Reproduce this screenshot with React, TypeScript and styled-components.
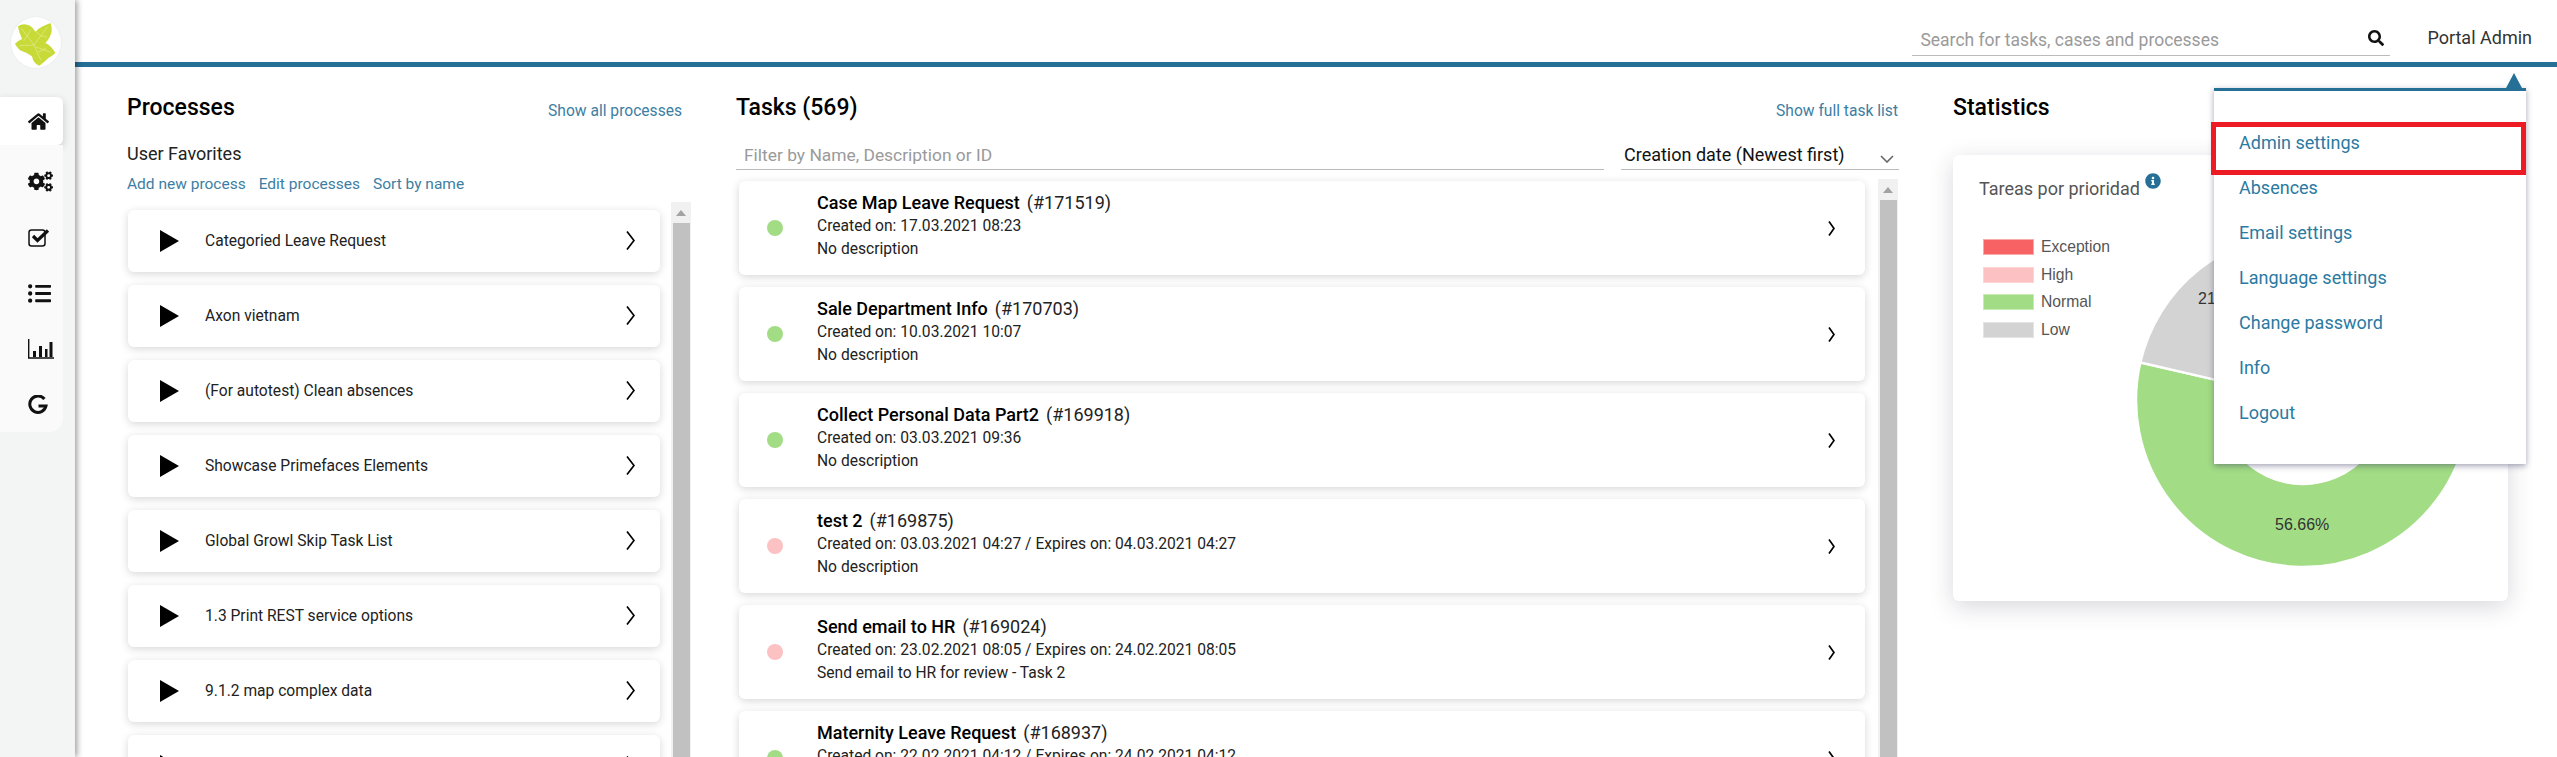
import styled, { createGlobalStyle } from "styled-components";
import {
  FaCogs,
  FaHome,
  FaInfoCircle,
  FaListUl,
  FaSearch,
} from "react-icons/fa";

const GlobalStyle = createGlobalStyle`
  html, body {
    margin: 0;
    height: 757px;
    overflow: hidden;
    background: #fff;
    font-family: Roboto, "Noto Sans", sans-serif;
    color: #111;
  }
  * {
    box-sizing: border-box;
  }
`;

// the last row is cut by the window, only its icons show
const processes = [
  "Categoried Leave Request",
  "Axon vietnam",
  "(For autotest) Clean absences",
  "Showcase Primefaces Elements",
  "Global Growl Skip Task List",
  "1.3 Print REST service options",
  "9.1.2 map complex data",
  "",
];

type Task = {
  name: string;
  id: number;
  dates: string;
  description: string;
  priority: "normal" | "high";
};

const tasks: Task[] = [
  { name: "Case Map Leave Request", id: 171519, dates: "Created on: 17.03.2021 08:23", description: "No description", priority: "normal" },
  { name: "Sale Department Info", id: 170703, dates: "Created on: 10.03.2021 10:07", description: "No description", priority: "normal" },
  { name: "Collect Personal Data Part2", id: 169918, dates: "Created on: 03.03.2021 09:36", description: "No description", priority: "normal" },
  { name: "test 2", id: 169875, dates: "Created on: 03.03.2021 04:27 / Expires on: 04.03.2021 04:27", description: "No description", priority: "high" },
  { name: "Send email to HR", id: 169024, dates: "Created on: 23.02.2021 08:05 / Expires on: 24.02.2021 08:05", description: "Send email to HR for review - Task 2", priority: "high" },
  { name: "Maternity Leave Request", id: 168937, dates: "Created on: 22.02.2021 04:12 / Expires on: 24.02.2021 04:12", description: "", priority: "normal" },
];

const legend = [
  { label: "Exception", fill: "#f76365", edge: "#fbaaaa" },
  { label: "High", fill: "#fcc1c2", edge: "#fdd5d5" },
  { label: "Normal", fill: "#a2dc85", edge: "#c6ecb4" },
  { label: "Low", fill: "#d3d3d3", edge: "#e4e4e4" },
];

const menuItems = [
  "Admin settings",
  "Absences",
  "Email settings",
  "Language settings",
  "Change password",
  "Info",
  "Logout",
];

// donut segment, angles in degrees clockwise from the +x axis
function segment(start: number, end: number) {
  const c = 170;
  const outer = 167;
  const inner = 84;
  const pt = (r: number, a: number) => {
    const rad = (a * Math.PI) / 180;
    return `${c + r * Math.cos(rad)} ${c + r * Math.sin(rad)}`;
  };
  const large = end - start > 180 ? 1 : 0;
  return `M${pt(outer, start)} A${outer} ${outer} 0 ${large} 1 ${pt(outer, end)} L${pt(inner, end)} A${inner} ${inner} 0 ${large} 0 ${pt(inner, start)} Z`;
}

function Donut() {
  return (
    <DonutSvg viewBox="0 0 340 340" aria-hidden="true">
      <path d={segment(-11, 193)} fill="#a2dc85" stroke="#fff" strokeWidth="2.5" />
      <path d={segment(193, 270)} fill="#d3d3d3" stroke="#fff" strokeWidth="2.5" />
      <path d={segment(270, 325)} fill="#fcc1c2" stroke="#fff" strokeWidth="2.5" />
      <path d={segment(325, 349)} fill="#f76365" stroke="#fff" strokeWidth="2.5" />
      <ChartLabel x="65" y="74">21.34%</ChartLabel>
      <ChartLabel x="142" y="300">56.66%</ChartLabel>
    </DonutSvg>
  );
}

function Logo() {
  return (
    <LogoCircle>
      <svg width="50" height="50" viewBox="3 6 150 150" aria-hidden="true">
        <path
          d="M24 34 Q40 22 60 32 Q70 38 76 50 Q88 36 122 24 Q130 50 118 68 Q112 78 106 84 Q124 92 136 114 Q126 124 116 128 Q102 142 88 152 Q70 146 66 124 Q48 112 30 106 Q20 96 15 86 Q26 76 36 72 Q26 52 24 34 Z"
          fill="#c8da38"
        />
        <path
          d="M34 40 L72 90 L92 135 M72 90 L112 36 M72 90 L28 92 M78 96 L122 112 M52 62 L40 78 M52 62 L62 44 M92 62 L78 50 M92 62 L110 66 M84 112 L108 100"
          fill="none"
          stroke="#e3ec93"
          strokeWidth="2"
        />
      </svg>
    </LogoCircle>
  );
}

function CheckIcon() {
  return (
    <svg width="25" height="19" viewBox="0 0 25 19" aria-hidden="true">
      <rect x="1" y="2" width="16" height="16" rx="2.5" fill="none" stroke="#111" strokeWidth="1.5" />
      <path d="M5 8 L9.5 12.5 L20 2.5" fill="none" stroke="#111" strokeWidth="3.2" />
    </svg>
  );
}

function BarsIcon() {
  return (
    <svg width="26" height="20" viewBox="0 0 26 20" aria-hidden="true">
      <path d="M0.7 0 V19 H26" fill="none" stroke="#111" strokeWidth="1.4" />
      <path d="M5 12h3v6H5z M11 7h3v11h-3z M17 10h2.5v8H17z M21.5 3h3v15h-3z" fill="#111" />
    </svg>
  );
}

function GIcon() {
  return (
    <svg width="20" height="20" viewBox="0 0 20 20" aria-hidden="true">
      <path d="M16.4 4 A8.2 8.2 0 1 0 18 11 H10.5" fill="none" stroke="#111" strokeWidth="3" />
    </svg>
  );
}

function Play() {
  return (
    <svg width="19" height="22" viewBox="0 0 19 22" aria-hidden="true">
      <polygon points="0,0 19,11 0,22" fill="#000" />
    </svg>
  );
}

function Chevron({ size }: { size: "large" | "small" }) {
  const h = size === "large" ? 19 : 15;
  const w = size === "large" ? 9 : 7;
  return (
    <ChevronSvg width={w} height={h} viewBox={`0 0 ${w} ${h}`} aria-hidden="true">
      <polyline points={`1,0.5 ${w - 1},${h / 2} 1,${h - 0.5}`} fill="none" stroke="#000" strokeWidth="1.7" />
    </ChevronSvg>
  );
}

function Scrollbar() {
  return (
    <Track>
      <ArrowBox>
        <TrackArrow />
      </ArrowBox>
      <Thumb />
    </Track>
  );
}

export default function App() {
  return (
    <Page>
      <GlobalStyle />
      <Sidebar>
        <Logo />
        <HomeTab>
          <FaHome size={21} />
        </HomeTab>
        <NavGroup>
          <NavItem>
            <FaCogs size={25} />
          </NavItem>
          <NavItem>
            <CheckIcon />
          </NavItem>
          <NavItem>
            <FaListUl size={23} />
          </NavItem>
          <NavItem>
            <BarsIcon />
          </NavItem>
          <NavItem>
            <GIcon />
          </NavItem>
        </NavGroup>
      </Sidebar>

      <Main>
        <Header>
          <SearchBox>
            <SearchInput placeholder="Search for tasks, cases and processes" readOnly />
            <FaSearch size={16} />
          </SearchBox>
          <UserName>Portal Admin</UserName>
        </Header>

        <Content>
          <Column>
            <SectionHead>
              <SectionTitle>Processes</SectionTitle>
              <HeadLink $inset={9}>Show all processes</HeadLink>
            </SectionHead>
            <Subtitle>User Favorites</Subtitle>
            <LinkRow>
              <RowLink>Add new process</RowLink>
              <RowLink>Edit processes</RowLink>
              <RowLink>Sort by name</RowLink>
            </LinkRow>
            <ProcessArea>
              <ProcessList>
                {processes.map((name) => (
                  <ProcessCard key={name}>
                    <Play />
                    <ProcessName>{name}</ProcessName>
                    <Chevron size="large" />
                  </ProcessCard>
                ))}
              </ProcessList>
              <Scrollbar />
            </ProcessArea>
          </Column>

          <Column>
            <SectionHead>
              <SectionTitle>Tasks (569)</SectionTitle>
              <HeadLink $inset={1}>Show full task list</HeadLink>
            </SectionHead>
            <FilterRow>
              <FilterInput placeholder="Filter by Name, Description or ID" readOnly />
              <SortSelect>
                Creation date (Newest first)
                <svg width="14" height="8" viewBox="0 0 14 8" aria-hidden="true">
                  <polyline points="1,1 7,7 13,1" fill="none" stroke="#666" strokeWidth="1.6" />
                </svg>
              </SortSelect>
            </FilterRow>
            <TaskArea>
              <TaskList>
                {tasks.map((t) => (
                  <TaskCard key={t.id}>
                    <PriorityDot $priority={t.priority} />
                    <TaskBody>
                      <TaskTitle>
                        <strong>{t.name}</strong>
                        <span>(#{t.id})</span>
                      </TaskTitle>
                      <TaskMeta>{t.dates}</TaskMeta>
                      <TaskMeta>{t.description}</TaskMeta>
                    </TaskBody>
                    <Chevron size="small" />
                  </TaskCard>
                ))}
              </TaskList>
              <Scrollbar />
            </TaskArea>
          </Column>

          <StatsColumn>
            <SectionHead>
              <SectionTitle>Statistics</SectionTitle>
            </SectionHead>
            <StatsCard>
              <StatsTitle>
                Tareas por prioridad
                <InfoMark>
                  <FaInfoCircle size={16} />
                </InfoMark>
              </StatsTitle>
              <ChartRow>
                <Legend>
                  {legend.map((l) => (
                    <LegendRow key={l.label}>
                      <Swatch $fill={l.fill} $edge={l.edge} />
                      {l.label}
                    </LegendRow>
                  ))}
                </Legend>
                <Donut />
              </ChartRow>
            </StatsCard>
          </StatsColumn>
        </Content>
      </Main>

      <UserMenu>
        {menuItems.map((item, i) => (
          <MenuItem key={item} $active={i === 0}>
            {item}
          </MenuItem>
        ))}
      </UserMenu>
    </Page>
  );
}

const Page = styled.div`
  position: relative;
  display: flex;
  width: 2557px;
  height: 757px;
  overflow: hidden;
`;

const Sidebar = styled.aside`
  position: relative;
  z-index: 2;
  flex: 0 0 75px;
  padding-top: 17px;
  background: #f3f5f5;
  box-shadow: 2px 0 6px rgba(0, 0, 0, 0.4);
`;

const LogoCircle = styled.div`
  width: 50px;
  height: 51px;
  margin-left: 11px;
  border-radius: 50%;
  background: #fff;
  box-shadow: 0 0 2px rgba(0, 0, 0, 0.08);
`;

const HomeTab = styled.div`
  display: flex;
  align-items: center;
  padding-left: 28px;
  width: 63px;
  height: 48px;
  margin-top: 29px;
  background: #fff;
  border-radius: 0 6px 6px 0;
  box-shadow: 0 3px 8px rgba(0, 0, 0, 0.18);
`;

const NavGroup = styled.nav`
  width: 63px;
  height: 287px;
  padding-top: 8px;
  background: #fafafa;
  border-radius: 0 0 14px 0;
`;

const NavItem = styled.div`
  display: flex;
  align-items: center;
  height: 56px;
  padding-left: 28px;
  color: #111;
`;

const Main = styled.div`
  flex: 1;
  min-width: 0;
  display: flex;
  flex-direction: column;
`;

const Header = styled.header`
  display: flex;
  justify-content: flex-end;
  align-items: flex-start;
  flex: 0 0 67px;
  padding: 24px 25px 0 0;
  border-bottom: 5px solid #266f96;
`;

const SearchBox = styled.div`
  display: flex;
  align-items: center;
  width: 478px;
  height: 32px;
  padding: 0 6px 0 8px;
  border-bottom: 1px solid #bbb;
  color: #111;

  svg {
    margin-top: -3px;
  }
`;

const SearchInput = styled.input`
  flex: 1;
  border: 0;
  padding: 0;
  outline: none;
  background: none;
  font: 400 17.5px/30px Roboto, sans-serif;

  &::placeholder {
    color: #9a9a9a;
    opacity: 1;
  }
`;

const UserName = styled.div`
  margin-left: 37px;
  font-size: 18px;
  line-height: 28px;
  color: #333;
`;

const Content = styled.main`
  flex: 1;
  min-height: 0;
  display: grid;
  grid-template-columns: 564px 1163px 564px;
  column-gap: 45px;
  padding: 28px 0 0 52px;
`;

const Column = styled.section`
  display: flex;
  flex-direction: column;
  min-width: 0;
  min-height: 0;
`;

const StatsColumn = styled(Column)`
  margin-left: 9px;
`;

const SectionHead = styled.div`
  display: flex;
  align-items: center;
  justify-content: space-between;
  height: 24px;
`;

const SectionTitle = styled.h2`
  margin: 1px 0 0;
  font-size: 23px;
  font-weight: 500;
  line-height: 24px;
  color: #000;
`;

const HeadLink = styled.a<{ $inset: number }>`
  margin: 8px ${({ $inset }) => $inset}px 0 0;
  font-size: 15.6px;
  color: #3d7ea3;
`;

const Subtitle = styled.div`
  margin-top: 23px;
  font-size: 18px;
  line-height: 24px;
  color: #222;
`;

const LinkRow = styled.div`
  display: flex;
  gap: 13px;
  margin-top: 8px;
  height: 20px;
  line-height: 20px;
`;

const RowLink = styled.a`
  font-size: 15.5px;
  color: #3d7ea3;
`;

const ProcessArea = styled.div`
  flex: 1;
  min-height: 0;
  display: flex;
  margin-top: 8px;
`;

const ProcessList = styled.div`
  width: 544px;
  display: flex;
  flex-direction: column;
  gap: 13px;
  padding: 8px 11px 0 1px;
`;

const ProcessCard = styled.div`
  flex: 0 0 62px;
  display: flex;
  align-items: center;
  padding: 0 25px 1px 32px;
  background: #fff;
  border-radius: 6px;
  box-shadow: 0 2px 9px rgba(0, 0, 0, 0.16);
`;

const ProcessName = styled.div`
  margin-left: 26px;
  font-size: 15.6px;
  color: #222;
`;

const ChevronSvg = styled.svg`
  margin-left: auto;
  flex: none;
`;

const Track = styled.div`
  flex: 0 0 20px;
  display: flex;
  flex-direction: column;
  align-items: center;
  background: #f1f1f1;
`;

const ArrowBox = styled.div`
  flex: 0 0 21px;
  display: flex;
  align-items: center;
  justify-content: center;
`;

const TrackArrow = styled.div`
  width: 0;
  height: 0;
  border-left: 5px solid transparent;
  border-right: 5px solid transparent;
  border-bottom: 6px solid #a3a3a3;
`;

const Thumb = styled.div`
  flex: 1;
  width: 17px;
  background: #c1c1c1;
`;

const FilterRow = styled.div`
  display: flex;
  gap: 17px;
  margin-top: 21px;
  height: 30px;
`;

const FilterInput = styled.input`
  flex: 0 0 868px;
  height: 30px;
  border: 0;
  border-bottom: 1px solid #bbb;
  padding: 0 8px;
  outline: none;
  background: none;
  font: 400 17.4px/28px Roboto, sans-serif;

  &::placeholder {
    color: #9a9a9a;
    opacity: 1;
  }
`;

const SortSelect = styled.div`
  flex: 1;
  display: flex;
  align-items: center;
  justify-content: space-between;
  padding: 0 5px 0 3px;
  border-bottom: 1px solid #bbb;
  font-size: 18px;
  line-height: 28px;
  color: #111;

  svg {
    margin-top: 8px;
  }
`;

const TaskArea = styled.div`
  flex: 1;
  min-height: 0;
  display: flex;
  margin-top: 9px;
`;

const TaskList = styled.div`
  width: 1142px;
  display: flex;
  flex-direction: column;
  gap: 12px;
  padding: 2px 13px 0 3px;
`;

const TaskCard = styled.article`
  flex: 0 0 94px;
  display: flex;
  align-items: center;
  padding: 0 30px 0 28px;
  background: #fff;
  border-radius: 6px;
  box-shadow: 0 2px 9px rgba(0, 0, 0, 0.16);
`;

const PriorityDot = styled.span<{ $priority: "normal" | "high" }>`
  flex: none;
  width: 16px;
  height: 16px;
  border-radius: 50%;
  background: ${({ $priority }) =>
    $priority === "high" ? "#fcc1c2" : "#a2dc85"};
`;

const TaskBody = styled.div`
  margin-left: 34px;
  padding-bottom: 5px;
`;

const TaskTitle = styled.div`
  display: flex;
  gap: 7px;
  font-size: 18px;
  line-height: 24px;
  color: #222;

  strong {
    font-weight: 500;
    color: #000;
  }
`;

const TaskMeta = styled.div`
  min-height: 23px;
  font-size: 15.6px;
  line-height: 23px;
  color: #222;
`;

const StatsCard = styled.div`
  height: 446px;
  margin-top: 36px;
  padding: 22px 26px 0;
  background: #fff;
  border-radius: 6px;
  box-shadow: 0 6px 24px rgba(40, 40, 70, 0.18);
`;

const StatsTitle = styled.div`
  display: flex;
  font-size: 18px;
  line-height: 24px;
  color: #555;
`;

const InfoMark = styled.span`
  margin: -6px 0 0 5px;
  color: #266f96;
`;

const ChartRow = styled.div`
  display: flex;
  margin-top: 29px;
`;

const Legend = styled.div`
  flex: 0 0 120px;
  display: flex;
  flex-direction: column;
  gap: 11.5px;
  padding: 9px 0 0 4px;
`;

const LegendRow = styled.div`
  display: flex;
  align-items: center;
  gap: 7px;
  height: 16px;
  font-family: "Liberation Sans", sans-serif;
  font-size: 15.7px;
  color: #555;
`;

const Swatch = styled.span<{ $fill: string; $edge: string }>`
  flex: 0 0 51px;
  height: 16px;
  background: ${({ $fill }) => $fill};
  border: 1px solid ${({ $edge }) => $edge};
`;

const DonutSvg = styled.svg`
  flex: 0 0 340px;
  height: 340px;
  margin-left: 23px;
`;

const ChartLabel = styled.text`
  font-family: "Liberation Sans", sans-serif;
  font-size: 16px;
  fill: #333;
`;

const UserMenu = styled.div`
  position: absolute;
  z-index: 3;
  top: 88px;
  right: 31px;
  width: 312px;
  height: 376px;
  padding-top: 30px;
  background: #fff;
  border-top: 3px solid #266f96;
  box-shadow: 0 2px 6px rgba(50, 50, 90, 0.45);

  &::before {
    content: "";
    position: absolute;
    top: -18px;
    right: 4px;
    border-left: 8.5px solid transparent;
    border-right: 8.5px solid transparent;
    border-bottom: 15px solid #266f96;
  }
`;

const MenuItem = styled.div<{ $active: boolean }>`
  position: relative;
  height: 45px;
  padding-left: 25px;
  font-size: 18px;
  line-height: 43px;
  color: #2b7aa1;

  ${({ $active }) =>
    $active &&
    `
    &::after {
      content: "";
      position: absolute;
      top: 1px;
      left: -3px;
      right: 0;
      height: 43px;
      border: 5px solid #ed1c24;
    }
  `}
`;
